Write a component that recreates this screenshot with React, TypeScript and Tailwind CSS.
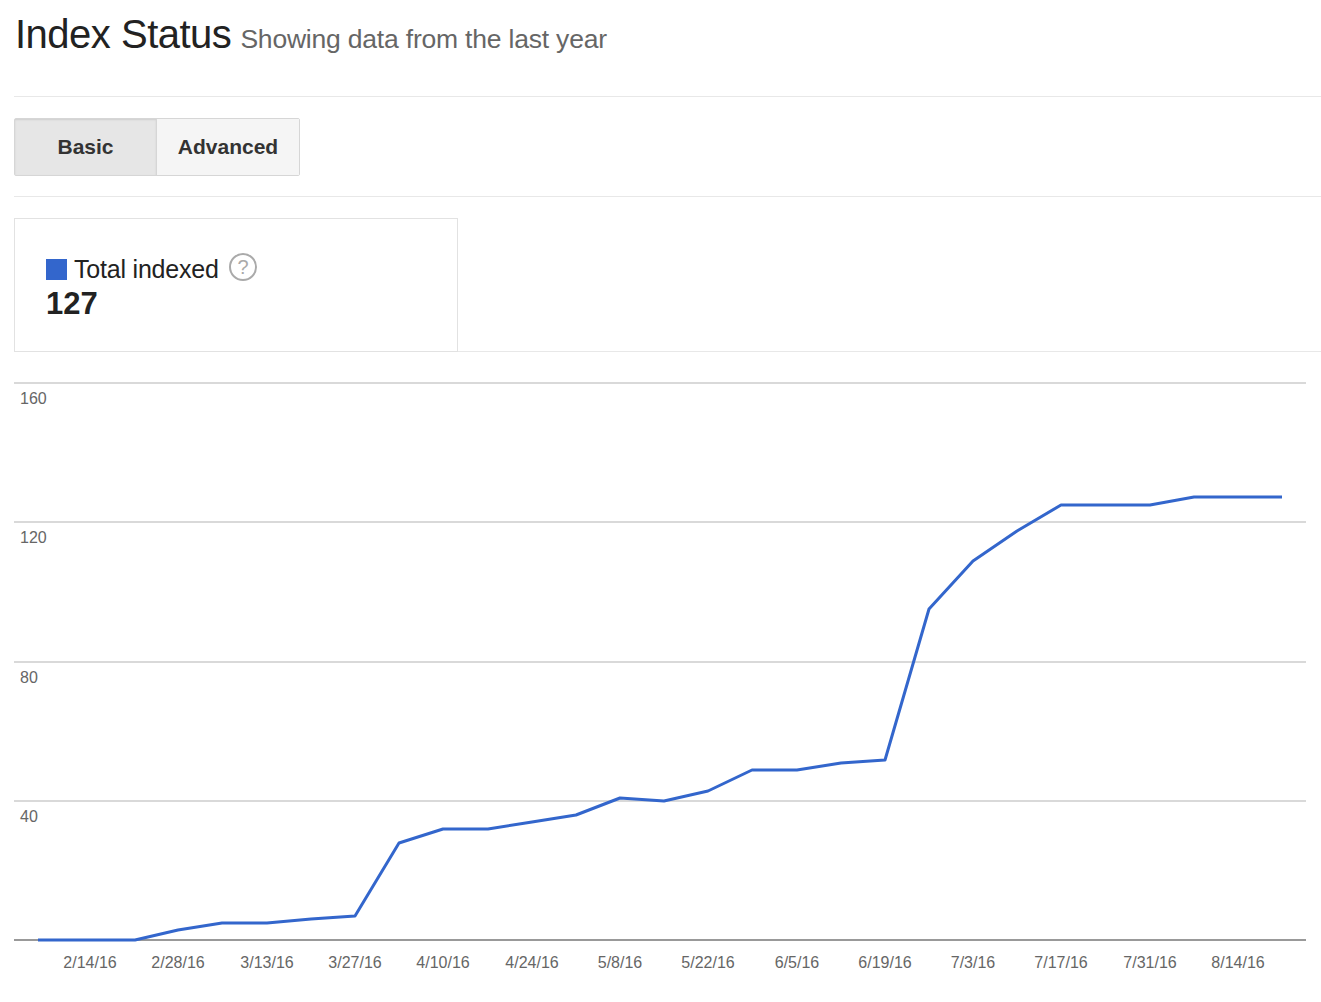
export default function App() {
  const pts: [number, number][] = [[38,940],[135,940],[178,930],[222,923],[267,923],[311,919],[355,916],[399,843],[443,829],[488,829],[532,822],[576,815],[620,798],[664,801],[708,791],[752,770],[797,770],[841,763],[885,760],[929,609],[973,561],[1017,531],[1061,505],[1105,505],[1150,505],[1194,497],[1238,497],[1282,497]];
  const oy = 370;
  const xl: [string, number][] = [["2/14/16",90],["2/28/16",178],["3/13/16",267],["3/27/16",355],["4/10/16",443],["4/24/16",532],["5/8/16",620],["5/22/16",708],["6/5/16",797],["6/19/16",885],["7/3/16",973],["7/17/16",1061],["7/31/16",1150],["8/14/16",1238]];
  const yl: [string, number][] = [["160",383],["120",522],["80",662],["40",801]];
  return (
    <div className="w-[1321px] h-[1002px] bg-white overflow-hidden" style={{ fontFamily: '"Liberation Sans", Arial, sans-serif' }}>
      <div className="pl-[15px] pt-[4px] h-[96px] flex items-baseline gap-[9px]">
        <span className="text-[40px] text-[#222] tracking-[-0.5px]">Index Status</span>
        <span className="text-[26.5px] text-[#666] tracking-[-0.2px]">Showing data from the last year</span>
      </div>
      <div className="ml-[14px] border-t border-[#e8e8e8]" />
      <div className="ml-[14px] mt-[21px] flex h-[58px] w-[286px] border border-[#d6d6d6] rounded-[2px]">
        <div className="w-[142px] flex items-center justify-center bg-[#e6e6e6] border-r border-[#d6d6d6] text-[21px] font-bold text-[#333] shadow-[inset_0_1px_2px_rgba(0,0,0,0.1)]">Basic</div>
        <div className="flex-1 flex items-center justify-center bg-[#f5f5f5] text-[21px] font-bold text-[#333]">Advanced</div>
      </div>
      <div className="ml-[14px] mt-[20px] border-t border-[#e8e8e8]" />
      <div className="ml-[14px] mt-[21px] flex">
        <div className="w-[444px] h-[134px] border border-[#e2e2e2] pl-[31px] pt-[32px]">
          <div className="flex items-center">
            <span className="w-[21px] h-[21px] bg-[#3366cc] mr-[7px]" />
            <span className="text-[25px] text-[#222] tracking-[-0.2px]">Total indexed</span>
            <svg width="30" height="30" viewBox="0 0 30 30" className="ml-[9px] -mt-[6px]">
              <circle cx="15" cy="15" r="13" fill="none" stroke="#aaa" strokeWidth="2" />
              <text x="15" y="22" textAnchor="middle" fontSize="20" fill="#aaa" fontFamily="Liberation Sans, Arial, sans-serif">?</text>
            </svg>
          </div>
          <div className="text-[31px] font-bold text-[#222] leading-none -mt-[1px]">127</div>
        </div>
        <div className="flex-1 h-[134px] border-b border-[#e8e8e8]" />
      </div>
      <svg width="1321" height="620" viewBox={`0 ${oy} 1321 620`} className="block mt-[18px]" style={{ fontFamily: '"Liberation Sans", Arial, sans-serif' }}>
        {[383, 522, 662, 801].map((y) => (
          <line key={y} x1="14" x2="1306" y1={y} y2={y} stroke="#cccccc" strokeWidth="1.5" />
        ))}
        <line x1="14" x2="1306" y1="940" y2="940" stroke="#777" strokeWidth="1.5" />
        {yl.map(([t, y]) => (
          <text key={t} x="20" y={y + 21} fontSize="16" fill="#666">{t}</text>
        ))}
        {xl.map(([t, x]) => (
          <text key={t} x={x} y="968" fontSize="16" fill="#666" textAnchor="middle">{t}</text>
        ))}
        <polyline points={pts.map((p) => p.join(",")).join(" ")} fill="none" stroke="#3366cc" strokeWidth="3" strokeLinejoin="round" />
      </svg>
    </div>
  );
}
